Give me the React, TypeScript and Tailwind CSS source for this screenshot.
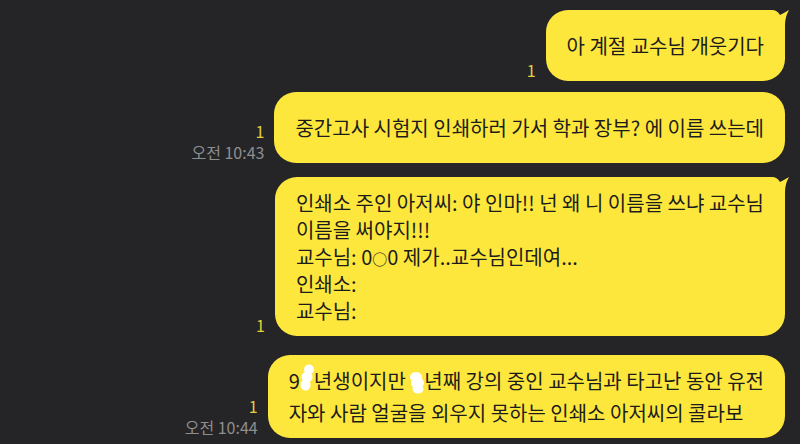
import type { ReactNode } from 'react';

type Message = {
  body: ReactNode;
  time?: string;
  tail?: boolean;
  gap: string;
};

// White marker scribble that hides a digit
const Scribble = ({ variant }: { variant: 1 | 2 }) => (
  <svg
    width="14"
    height="30"
    viewBox="0 0 14 30"
    className="relative -top-[5px] inline-block align-middle"
  >
    {variant === 1 ? (
      <g fill="#ffffff">
        <ellipse cx="9" cy="5.5" rx="5" ry="5" />
        <ellipse cx="7" cy="13" rx="5.5" ry="5.5" />
        <ellipse cx="5.5" cy="21" rx="5" ry="5.5" />
      </g>
    ) : (
      <g fill="#ffffff">
        <ellipse cx="6" cy="13" rx="6" ry="5" />
        <ellipse cx="7.5" cy="19" rx="6.5" ry="6" />
        <ellipse cx="8" cy="25" rx="5.5" ry="4.5" />
      </g>
    )}
  </svg>
);

// Pointed tail on the top-right corner of the first bubble in a group
const Tail = () => (
  <svg
    width="26"
    height="28"
    viewBox="0 0 26 28"
    className="pointer-events-none absolute -right-[5px] top-0"
  >
    <path
      d="M0 0 L8 0 Q13 0 16 5 Q20 3 25 0 Q21 7 21 15 L21 28 L0 28 Z"
      fill="#fde73c"
    />
  </svg>
);

const messages: Message[] = [
  {
    body: '아 계절 교수님 개웃기다',
    tail: true,
    gap: 'mt-[10px]',
  },
  {
    body: '중간고사 시험지 인쇄하러 가서 학과 장부? 에 이름 쓰는데',
    time: '오전 10:43',
    gap: 'mt-[11px]',
  },
  {
    body: (
      <>
        인쇄소 주인 아저씨: 야 인마!! 넌 왜 니 이름을 쓰냐 교수님
        <br />
        이름을 써야지!!!
        <br />
        교수님: 0<span className="text-[15px] leading-none">○</span>0 제가..교수님인데여...
        <br />
        인쇄소:
        <br />
        교수님:
      </>
    ),
    tail: true,
    gap: 'mt-[14px]',
  },
  {
    body: (
      <>
        9<Scribble variant={1} />
        년생이지만 <Scribble variant={2} />
        년째 강의 중인 교수님과 타고난 동안 유전
        <br />
        자와 사람 얼굴을 외우지 못하는 인쇄소 아저씨의 콜라보
      </>
    ),
    time: '오전 10:44',
    gap: 'mt-[19px]',
  },
];

export default function App() {
  return (
    <div className="h-[444px] w-full overflow-hidden bg-[#252528] pr-[15px] font-['Noto_Sans_CJK_KR',sans-serif]">
      <div className="flex flex-col items-end">
        {messages.map((m, i) => (
          <div key={i} className={`flex items-end gap-[10px] ${m.gap}`}>
            <div className="flex flex-col items-end text-[16px] leading-[21px]">
              <span className="text-[#e3cf3d]">1</span>
              {m.time && <span className="text-[#8e8e8e]">{m.time}</span>}
            </div>
            <div className="relative flex min-h-[71px] items-center rounded-[22px] bg-[#fde73c] px-[21px] py-3 text-[20px] leading-[27px] text-[#1c1c1c]">
              <p>{m.body}</p>
              {m.tail && <Tail />}
            </div>
          </div>
        ))}
      </div>
    </div>
  );
}
